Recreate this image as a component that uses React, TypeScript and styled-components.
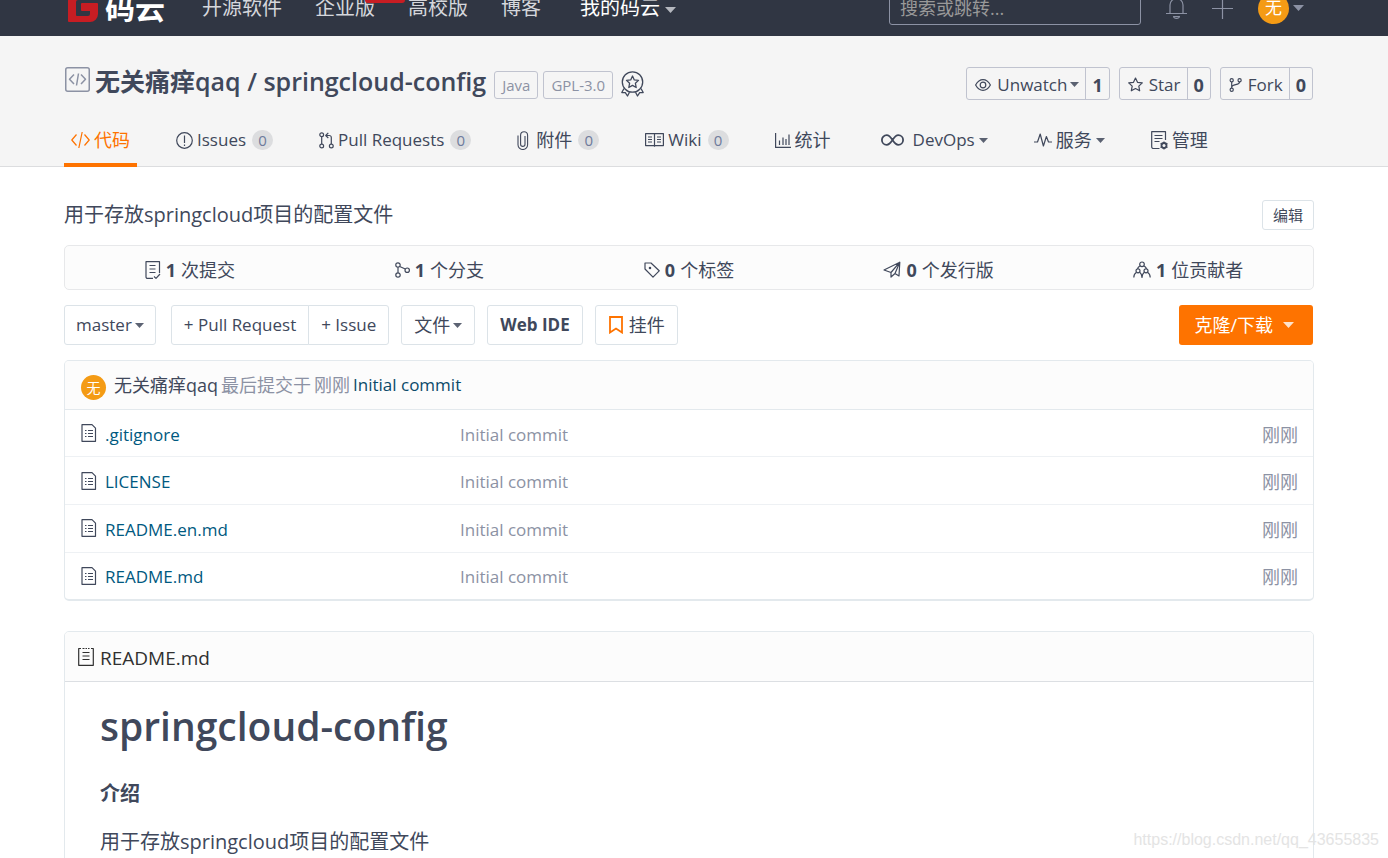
import React from "react";
import styled, { createGlobalStyle, css } from "styled-components";

const ink = "#40485b";
const muted = "#8c92a4";
const line = "#e3e9ed";
const orange = "#fe7300";
const link = "#005980";

const GlobalStyle = createGlobalStyle`
  *, *::before, *::after { box-sizing: border-box; }
  body {
    margin: 0;
    background: #fff;
    color: ${ink};
    font-family: "Open Sans", "Noto Sans CJK SC", sans-serif;
    font-size: 17px;
    line-height: 24px;
    font-weight: 400;
  }
  button, input { font: inherit; color: inherit; }
  a { color: inherit; text-decoration: none; }
  b { font-weight: 700; }
  h1, h2, h3, p { margin: 0; }
  svg { display: block; flex: none; }
`;

/* ---------- icons ---------- */

type IconProps = { w: number; h: number; sw?: number; children: React.ReactNode };
const Icon = ({ w, h, sw = 1.2, children }: IconProps) => (
  <svg
    width={w}
    height={h}
    viewBox={`0 0 ${w} ${h}`}
    fill="none"
    stroke="currentColor"
    strokeWidth={sw}
    strokeLinejoin="round"
    aria-hidden="true"
  >
    {children}
  </svg>
);

const Caret = () => (
  <svg width="9" height="5" viewBox="0 0 9 5" fill="currentColor" opacity="0.85" aria-hidden="true">
    <path d="M0 0h9L4.500 5z" />
  </svg>
);
const NavCaret = () => (
  <svg width="11" height="6" viewBox="0 0 11 6" fill="currentColor" aria-hidden="true">
    <path d="M0 0h11L5.500 6z" />
  </svg>
);
const LogoMark = () => (
  <svg width="30" height="30" viewBox="0 0 30 30" aria-hidden="true">
    <path
      fill="#c71d23"
      d="M8 0h21a1 1 0 0 1 1 1v5a1 1 0 0 1-1 1H10a2 2 0 0 0-2 2v13a1 1 0 0 0 1 1h11a2 2 0 0 0 2-2v-3h-8a1 1 0 0 1-1-1v-6a1 1 0 0 1 1-1h15a1 1 0 0 1 1 1v10a8 8 0 0 1-8 8H1a1 1 0 0 1-1-1V8a8 8 0 0 1 8-8z"
    />
  </svg>
);
const BellIcon = () => (
  <Icon w={21} h={24}>
    <path d="M4 17.500V9a6.500 6.500 0 0 1 13 0v8.500M0 17.500h21M10.500 2.500V0M7.500 20.500c.5 2.600 5.500 2.600 6 0z" />
  </Icon>
);
const PlusIcon = () => (
  <Icon w={21} h={21}>
    <path d="M10.500 0v21M0 10.500h21" />
  </Icon>
);
const RepoIcon = () => (
  <Icon w={25} h={25} sw={1.500}>
    <rect x=".75" y=".75" width="23.500" height="23.500" rx="2" />
    <path d="M9 7.500 4.500 12.200 9 17M16 7.500l4.500 4.700L16 17M13.500 6.500l-2 12" />
  </Icon>
);
const MedalIcon = () => (
  <Icon w={23} h={26} sw={1.300}>
    <circle cx="11.500" cy="11" r="10.200" />
    <path d="m11.500 5 1.800 3.900 4.200.5-3.100 2.900.8 4.200-3.700-2.100-3.700 2.100.8-4.200-3.100-2.900 4.200-.5zM3 17.500.8 21.500l3.500.1L6.500 25l2-3.800M20 17.500l2.200 4-3.500.1L16.500 25l-2-3.800" />
  </Icon>
);
const CodeIcon = () => (
  <Icon w={19} h={16}>
    <path d="M5.500 2.500.8 8l4.700 5.500M13.500 2.500 18.200 8l-4.700 5.500M11.200 0 7.800 16" />
  </Icon>
);
const IssueIcon = () => (
  <Icon w={17} h={17}>
    <circle cx="8.500" cy="8.500" r="7.800" />
    <path d="M8.500 3.500v7.500M8.500 12.500v1.500" />
  </Icon>
);
const PullIcon = () => (
  <Icon w={15} h={17}>
    <circle cx="2.700" cy="2.700" r="1.900" />
    <circle cx="2.700" cy="14" r="1.900" />
    <circle cx="12.300" cy="14" r="1.900" />
    <path d="M2.700 4.600v7.500M12.300 12.100V5.500a2 2 0 0 0-2-2H7M9.300.8 6.700 3.500l2.600 2.500" />
  </Icon>
);
const ClipIcon = () => (
  <Icon w={15} h={19} sw={1.100}>
    <path d="M1 4.500v9.200a4.800 4.800 0 0 0 9.600 0V4.200a3.500 3.500 0 0 0-7 0v9a2.200 2.200 0 0 0 4.400 0V5" />
  </Icon>
);
const WikiIcon = () => (
  <Icon w={19} h={14}>
    <path d="M.6.600h17.800v12H.600zM9.500.600v13.200M3 4h4M3 6.500h4M3 9h4M12 4h4M12 6.500h4M12 9h4" />
  </Icon>
);
const StatsIcon = () => (
  <Icon w={16} h={15}>
    <path d="M.6 0v14.400H16M4.500 12V7.500M8 12V4.500M11 12V6M14 12V1.500" />
  </Icon>
);
const LoopIcon = () => (
  <svg
    width="32"
    height="12"
    viewBox="-4 0 32 12"
    fill="none"
    stroke="currentColor"
    strokeWidth="1.800"
    aria-hidden="true"
  >
    <path d="M11.500 6C9.500 3 8 1.200 5.700 1.200a4.800 4.800 0 0 0 0 9.600C8 10.800 9.500 9 11.500 6s3.500-4.800 5.800-4.800a4.800 4.800 0 0 1 0 9.600C15 10.800 13.500 9 11.500 6z" />
  </svg>
);
const PulseIcon = () => (
  <Icon w={18} h={14}>
    <path d="M0 9h3.500L6.200 1l3.200 12 3-9.500L14.500 9H18" />
  </Icon>
);
const ManageIcon = () => (
  <Icon w={17} h={19}>
    <path d="M8.500 17.500h-6a1.800 1.800 0 0 1-1.800-1.800V.700h13.800V9M3.500 4.500h8M3.500 7.500h8M3.500 10.500h5" />
    <circle cx="13" cy="14.500" r="2.500" strokeWidth="1.800" />
    <path d="M13 10.500v2M13 16.500v2M9.500 12.500l1.800 1M16.500 12.500l-1.800 1M9.500 16.500l1.800-1M16.500 16.500l-1.800-1" />
  </Icon>
);
const EyeIcon = () => (
  <Icon w={16} h={12}>
    <path d="M.6 6C2.500 2.600 5 .7 8 .7S13.500 2.600 15.400 6c-1.900 3.400-4.400 5.300-7.400 5.300S2.500 9.400.6 6z" />
    <circle cx="8" cy="6" r="2.800" />
  </Icon>
);
const StarIcon = () => (
  <Icon w={15} h={15}>
    <path d="m7.500 1 2 4.300 4.800.6-3.500 3.200.9 4.700-4.200-2.300-4.200 2.300.9-4.700L.700 5.900l4.800-.6z" />
  </Icon>
);
const ForkIcon = () => (
  <Icon w={13} h={14}>
    <circle cx="2.700" cy="2.300" r="1.600" />
    <circle cx="2.700" cy="11.700" r="1.600" />
    <circle cx="10.600" cy="2.300" r="1.600" />
    <path d="M2.700 3.900v6.200M10.600 3.900c0 3.300-7.400 2-7.900 5" />
  </Icon>
);
const CommitIcon = () => (
  <Icon w={16} h={18}>
    <path d="M8 17.400H2.500a1.500 1.500 0 0 1-1.500-1.500V.700h13.500V12M4.500 4.500h6M4.500 8h6M4.500 11.500h6M9 15.500l2 1.900 4-4.400" />
  </Icon>
);
const BranchIcon = () => (
  <Icon w={15} h={16}>
    <circle cx="3" cy="3" r="2.200" />
    <circle cx="3" cy="13" r="2.200" />
    <circle cx="12.200" cy="8.200" r="2.200" />
    <path d="M3 5.200v5.600M4.700 4.500 10.300 7" />
  </Icon>
);
const TagIcon = () => (
  <Icon w={16} h={16}>
    <path d="M1 1h6l8.200 7.800-6.200 6.400L1 7z" />
    <circle cx="6" cy="6" r=".7" />
  </Icon>
);
const PlaneIcon = () => (
  <Icon w={18} h={17}>
    <path d="M1 9 16.800 1.200 16 15l-4-2.500L8 16v-4.500zM16.800 1.200 8 11.500M16.800 1.200 12 12.500" />
  </Icon>
);
const PeopleIcon = () => (
  <Icon w={18} h={17}>
    <circle cx="9" cy="3.300" r="2.300" />
    <circle cx="5" cy="9.800" r="2" />
    <circle cx="13" cy="9.800" r="2" />
    <path d="M6.800 5C5.500 5.800 4.700 6.800 4.500 7.800M11.200 5c1.300.8 2.100 1.800 2.300 2.800M.8 16.500c0-2.500.8-4 2.500-5M7 11.500c1.200.9 1.800 2.300 2 5 .2-2.700.8-4.100 2-5M14.700 11.500c1.700 1 2.500 2.500 2.500 5" />
  </Icon>
);
const BookmarkIcon = () => (
  <Icon w={14} h={18} sw={1.800}>
    <path strokeLinejoin="miter" d="M1 1h12v15.500l-6-4-6 4z" />
  </Icon>
);
const FileIcon = () => (
  <Icon w={16} h={18}>
    <path d="M1 .7h10l3.500 3.500v13.100H1zM7 6.500h5M7 9.500h5M7 12.500h5M4 6.500h1.500M4 9.500h1.500M4 12.500h1.500" />
  </Icon>
);
const ReadmeIcon = () => (
  <Icon w={16} h={19}>
    <path d="M3 1.500H.7v16.800h14.600V1.500H13M4.500 5.500h7M4.500 9h7M4.500 12.500h7M4.500 1.500h2M7.500 1.500h1.500M10 1.500h1.500" />
  </Icon>
);

/* ---------- shell ---------- */

const Page = styled.div`
  height: 100vh;
  overflow: hidden;
  position: relative;
`;
const gutter = css`
  padding-left: 64px;
  padding-right: 74px;
`;

const TopBar = styled.header`
  height: 36px;
  overflow: hidden;
  display: flex;
  align-items: flex-end;
  background: #303643;
  color: #d5d7dc;
  ${gutter}
`;
const TopRow = styled.div`
  flex: 1 0 auto;
  height: 56px;
  display: flex;
  align-items: center;
`;
const Logo = styled.a`
  display: flex;
  align-items: center;
  gap: 7px;
  padding: 0 21px 0 4px;
  color: #fff;
  font-size: 30px;
  line-height: 36px;
  font-weight: 700;
`;
const MainNav = styled.nav`
  display: flex;
  gap: 1px;
  font-size: 20px;
  line-height: 28px;
`;
const NavLink = styled.a<{ $active?: boolean }>`
  position: relative;
  display: flex;
  align-items: center;
  gap: 5px;
  padding: 0 16px;
  padding-left: ${(p) => (p.$active ? 22 : 16)}px;
  color: ${(p) => (p.$active ? "#fff" : "inherit")};
  svg { color: #b5b8bf; margin-top: 4px; }
`;
const HotMark = styled.span`
  position: absolute;
  right: -14px;
  top: -14px;
  width: 40px;
  height: 23px;
  border-radius: 3px;
  background: #c71d23;
`;
const TopTools = styled.div`
  margin-left: auto;
  padding-right: 10px;
  display: flex;
  align-items: center;
  gap: 25px;
  color: ${muted};
`;
const Search = styled.input`
  width: 252px;
  height: 34px;
  padding: 0 10px;
  border: 1px solid ${muted};
  border-radius: 3px;
  background: transparent;
  font-size: 18px;
  &::placeholder { color: #999; opacity: 1; }
`;
const PlainButton = styled.button`
  display: flex;
  align-items: center;
  gap: 4px;
  padding: 0;
  border: 0;
  background: none;
`;
const Avatar = styled.span<{ $size: number }>`
  flex: none;
  display: flex;
  align-items: center;
  justify-content: center;
  width: ${(p) => p.$size}px;
  height: ${(p) => p.$size}px;
  border-radius: 50%;
  background: #f49b15;
  color: #fff;
  font-size: ${(p) => (p.$size > 28 ? 17 : 14)}px;
  line-height: 20px;
`;

/* ---------- repository head ---------- */

const RepoHead = styled.section`
  height: 131px;
  padding-top: 31px;
  border-bottom: 1px solid #dcdddf;
  background: #f5f5f5;
  ${gutter}
`;
const TitleRow = styled.div`
  display: flex;
  align-items: center;
  height: 33px;
`;
const RepoGlyph = styled.span`
  align-self: flex-start;
  padding: 0 5px 0 1px;
  color: ${muted};
`;
const RepoTitle = styled.h2`
  align-self: flex-start;
  padding-right: 3px;
  font-size: 25px;
  line-height: 28px;
  font-weight: 600;
`;
const Tag = styled.a`
  align-self: flex-end;
  height: 28px;
  margin: 0 0 1px 5px;
  padding: 0 7px;
  border: 1px solid #c0c3cf;
  border-radius: 3px;
  color: ${muted};
  font-size: 15px;
  line-height: 27px;
`;
const Medal = styled.span`
  padding-left: 8px;
`;
const Actions = styled.div`
  margin-left: auto;
  padding-right: 1px;
  display: flex;
  gap: 9px;
`;
const ActionBox = styled.div`
  display: flex;
  height: 33px;
  border: 1px solid #c0c3cf;
  border-radius: 3px;
`;
const ActionButton = styled.button`
  display: flex;
  align-items: center;
  gap: 3px;
  padding: 2px 6px 0 8px;
  border: 0;
  background: none;
  svg:first-child { margin-right: 3px; }
`;
const ActionCount = styled.a`
  padding: 2px 6px 0;
  border-left: 1px solid #c0c3cf;
  font-size: 18px;
  line-height: 31px;
  font-weight: 700;
`;

const Tabs = styled.nav`
  display: flex;
  gap: 32px;
  height: 54px;
  margin-top: 13px;
`;
const Tab = styled.a<{ $active?: boolean; $latin: boolean }>`
  display: flex;
  align-items: center;
  gap: 4px;
  padding: 0 7px;
  border: solid transparent;
  border-width: 4px 0;
  border-bottom-color: ${(p) => (p.$active ? orange : "transparent")};
  color: ${(p) => (p.$active ? orange : ink)};
  font-size: ${(p) => (p.$latin ? 17 : 18)}px;
  white-space: nowrap;
`;
const Count = styled.span`
  min-width: 21px;
  height: 20px;
  margin-left: 2px;
  border-radius: 10px;
  background: #dcdddf;
  color: #6e7b9c;
  font-size: 15px;
  line-height: 20px;
  text-align: center;
`;

/* ---------- body ---------- */

const Body = styled.main`
  padding-top: 33px;
  ${gutter}
`;
const IntroRow = styled.div`
  display: flex;
  align-items: center;
  justify-content: space-between;
  height: 30px;
  font-size: 20px;
`;
const Button = styled.button<{
  $small?: boolean;
  $strong?: boolean;
  $latin?: boolean;
  $tight?: boolean;
}>`
  display: flex;
  align-items: center;
  gap: 3px;
  height: ${(p) => (p.$small ? 30 : 40)}px;
  padding: 0 ${(p) => (p.$small ? 10 : p.$tight ? 11 : 12)}px;
  border: 1px solid #dce3e8;
  border-radius: 3px;
  background: #fff;
  font-size: ${(p) => (p.$small ? 15 : p.$latin ? 17 : 18)}px;
  font-weight: ${(p) => (p.$strong ? 700 : 400)};
  white-space: nowrap;
`;
const Stats = styled.div`
  display: grid;
  grid-template-columns: repeat(5, 1fr);
  height: 45px;
  margin-top: 15px;
  padding-top: 4px;
  border: 1px solid #e7e8ea;
  border-radius: 5px;
  background: #fcfcfc;
`;
const Stat = styled.a`
  display: flex;
  align-items: center;
  justify-content: center;
  gap: 5px;
  font-size: 18px;
`;
const Toolbar = styled.div`
  display: flex;
  align-items: center;
  gap: 12px;
  margin-top: 15px;
`;
const Group = styled.div`
  display: flex;
  margin-left: 3px;
  button + button { margin-left: -1px; }
  button:first-child { border-radius: 3px 0 0 3px; }
  button:last-child { border-radius: 0 3px 3px 0; }
`;
const Orange = styled.span`
  padding: 0 3px 0 1px;
  color: ${orange};
`;
const CloneButton = styled.button`
  display: flex;
  align-items: center;
  gap: 10px;
  height: 40px;
  margin: 0 1px 0 auto;
  padding: 0 19px 0 15px;
  border: 0;
  border-radius: 3px;
  background: ${orange};
  color: #fff;
  font-size: 18px;
  svg { opacity: 0.8; }
`;
const Panel = styled.section`
  border: 1px solid ${line};
  border-radius: 5px;
  overflow: hidden;
`;
const FilesPanel = styled(Panel)`
  margin-top: 15px;
  border-bottom-width: 2px;
`;
const LastCommit = styled.div`
  display: flex;
  align-items: center;
  gap: 3px;
  height: 49px;
  padding: 0 16px;
  border-bottom: 1px solid ${line};
  background: #fcfcfc;
  color: ${muted};
  font-size: 18px;
`;
const CommitAvatar = styled.span`
  padding: 5px 5px 0 0;
`;
const CommitLink = styled.a<{ $name?: boolean }>`
  color: ${(p) => (p.$name ? ink : "#0b4a6a")};
  font-size: ${(p) => (p.$name ? 18 : 17)}px;
`;
const Files = styled.table`
  width: 100%;
  height: 189px;
  border-collapse: collapse;
  table-layout: fixed;
  font-size: 17px;
  tr + tr { border-top: 1px solid #eef1f4; }
  td { padding: 3px 0 0; color: ${muted}; }
  td:first-child { width: 395px; padding-left: 16px; }
  td:last-child { width: 120px; padding-right: 15px; text-align: right; font-size: 18px; }
`;
const FileLink = styled.a`
  display: flex;
  align-items: center;
  gap: 8px;
  color: ${link};
  svg { color: ${ink}; margin-top: -3px; }
`;
const ReadmePanel = styled(Panel)`
  margin-top: 30px;
  padding-bottom: 60px;
`;
const ReadmeHead = styled.div`
  display: flex;
  align-items: center;
  gap: 6px;
  height: 50px;
  padding: 3px 13px 0;
  border-bottom: 1px solid #dcdfe3;
  background: #fcfcfc;
  color: #303030;
  font-size: 19px;
  svg { margin-top: -3px; }
`;
const Article = styled.article`
  padding: 16px 35px 0;
  font-size: 20px;
  h1 { font-size: 39px; line-height: 56px; font-weight: 600; }
  h3 { margin-top: 24px; font-size: 20px; line-height: 32px; font-weight: 700; }
  p { margin-top: 16px; line-height: 32px; }
`;
const Watermark = styled.span`
  position: absolute;
  right: 9px;
  bottom: 8px;
  color: #e4e4e4;
  font-family: "Liberation Sans", Arial, sans-serif;
  font-size: 16px;
  line-height: 20px;
`;

const tabs = [
  { icon: <CodeIcon />, label: "代码", active: true },
  { icon: <IssueIcon />, label: "Issues", latin: true, count: 0 },
  { icon: <PullIcon />, label: "Pull Requests", latin: true, count: 0 },
  { icon: <ClipIcon />, label: "附件", count: 0 },
  { icon: <WikiIcon />, label: "Wiki", latin: true, count: 0 },
  { icon: <StatsIcon />, label: "统计" },
  { icon: <LoopIcon />, label: "DevOps", latin: true, menu: true },
  { icon: <PulseIcon />, label: "服务", menu: true },
  { icon: <ManageIcon />, label: "管理" },
];
const stats = [
  { icon: <CommitIcon />, n: 1, label: "次提交" },
  { icon: <BranchIcon />, n: 1, label: "个分支" },
  { icon: <TagIcon />, n: 0, label: "个标签" },
  { icon: <PlaneIcon />, n: 0, label: "个发行版" },
  { icon: <PeopleIcon />, n: 1, label: "位贡献者" },
];
const files = [".gitignore", "LICENSE", "README.en.md", "README.md"];

export default function App() {
  return (
    <>
      <GlobalStyle />
      <Page>
        <TopBar>
          <TopRow>
            <Logo href="#">
              <LogoMark />
              码云
            </Logo>
            <MainNav>
              <NavLink href="#">开源软件</NavLink>
              <NavLink href="#">
                企业版
                <HotMark />
              </NavLink>
              <NavLink href="#">高校版</NavLink>
              <NavLink href="#">博客</NavLink>
              <NavLink href="#" $active>
                我的码云
                <NavCaret />
              </NavLink>
            </MainNav>
            <TopTools>
              <Search type="search" aria-label="搜索或跳转" placeholder="搜索或跳转..." />
              <PlainButton aria-label="通知">
                <BellIcon />
              </PlainButton>
              <PlainButton aria-label="新建">
                <PlusIcon />
              </PlainButton>
              <PlainButton>
                <Avatar $size={31}>无</Avatar>
                <NavCaret />
              </PlainButton>
            </TopTools>
          </TopRow>
        </TopBar>

        <RepoHead>
          <TitleRow>
            <RepoGlyph>
              <RepoIcon />
            </RepoGlyph>
            <RepoTitle>
              <a href="#">无关痛痒qaq</a> / <a href="#">springcloud-config</a>
            </RepoTitle>
            <Tag href="#">Java</Tag>
            <Tag href="#">GPL-3.0</Tag>
            <Medal>
              <MedalIcon />
            </Medal>
            <Actions>
              <ActionBox>
                <ActionButton>
                  <EyeIcon />
                  Unwatch
                  <Caret />
                </ActionButton>
                <ActionCount href="#">1</ActionCount>
              </ActionBox>
              <ActionBox>
                <ActionButton>
                  <StarIcon />
                  Star
                </ActionButton>
                <ActionCount href="#">0</ActionCount>
              </ActionBox>
              <ActionBox>
                <ActionButton>
                  <ForkIcon />
                  Fork
                </ActionButton>
                <ActionCount href="#">0</ActionCount>
              </ActionBox>
            </Actions>
          </TitleRow>
          <Tabs>
            {tabs.map((t) => (
              <Tab key={t.label} href="#" $active={t.active} $latin={!!t.latin}>
                {t.icon}
                {t.label}
                {t.count !== undefined && <Count>{t.count}</Count>}
                {t.menu && <Caret />}
              </Tab>
            ))}
          </Tabs>
        </RepoHead>

        <Body>
          <IntroRow>
            <p>用于存放springcloud项目的配置文件</p>
            <Button $small>编辑</Button>
          </IntroRow>

          <Stats>
            {stats.map((s) => (
              <Stat key={s.label} href="#">
                {s.icon}
                <b>{s.n}</b>
                {s.label}
              </Stat>
            ))}
          </Stats>

          <Toolbar>
            <Button $latin $tight>
              master
              <Caret />
            </Button>
            <Group>
              <Button $latin>+ Pull Request</Button>
              <Button $latin>+ Issue</Button>
            </Group>
            <Button>
              文件
              <Caret />
            </Button>
            <Button $strong $latin>
              Web IDE
            </Button>
            <Button>
              <Orange>
                <BookmarkIcon />
              </Orange>
              挂件
            </Button>
            <CloneButton>
              克隆/下载
              <NavCaret />
            </CloneButton>
          </Toolbar>

          <FilesPanel>
            <LastCommit>
              <CommitAvatar>
                <Avatar $size={25}>无</Avatar>
              </CommitAvatar>
              <CommitLink href="#" $name>
                无关痛痒qaq
              </CommitLink>
              <span>最后提交于</span>
              <span>刚刚</span>
              <CommitLink href="#">Initial commit</CommitLink>
            </LastCommit>
            <Files>
              <tbody>
                {files.map((f) => (
                  <tr key={f}>
                    <td>
                      <FileLink href="#">
                        <FileIcon />
                        {f}
                      </FileLink>
                    </td>
                    <td>Initial commit</td>
                    <td>刚刚</td>
                  </tr>
                ))}
              </tbody>
            </Files>
          </FilesPanel>

          <ReadmePanel>
            <ReadmeHead>
              <ReadmeIcon />
              README.md
            </ReadmeHead>
            <Article>
              <h1>springcloud-config</h1>
              <h3>介绍</h3>
              <p>用于存放springcloud项目的配置文件</p>
            </Article>
          </ReadmePanel>
        </Body>
        <Watermark>https://blog.csdn.net/qq_43655835</Watermark>
      </Page>
    </>
  );
}
